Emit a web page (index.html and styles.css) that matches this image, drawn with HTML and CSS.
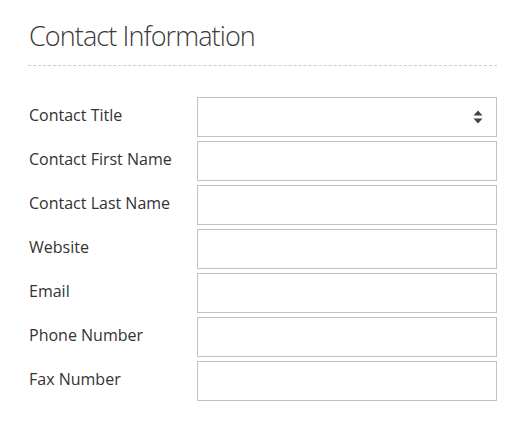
FILE: index.html
```html
<!DOCTYPE html>
<html lang="en">
<head>
  <meta charset="UTF-8">
  <title>Contact Information</title>
  <link rel="stylesheet" href="styles.css">
</head>
<body>
  <div class="section">
    <h2 class="section-title">Contact Information</h2>

    <form class="contact-form">
      <div class="row">
        <label for="title">Contact Title</label>
        <div class="select-wrap">
          <select id="title"><option></option></select>
          <svg class="caret" width="10" height="14" viewBox="0 0 10 14">
            <path d="M5 0.5 L9.5 5.5 L0.5 5.5 Z M5 13.5 L9.5 8.5 L0.5 8.5 Z" fill="#444"/>
          </svg>
        </div>
      </div>
      <div class="row">
        <label for="first">Contact First Name</label>
        <input type="text" id="first">
      </div>
      <div class="row">
        <label for="last">Contact Last Name</label>
        <input type="text" id="last">
      </div>
      <div class="row">
        <label for="web">Website</label>
        <input type="text" id="web">
      </div>
      <div class="row">
        <label for="email">Email</label>
        <input type="text" id="email">
      </div>
      <div class="row">
        <label for="phone">Phone Number</label>
        <input type="text" id="phone">
      </div>
      <div class="row">
        <label for="fax">Fax Number</label>
        <input type="text" id="fax">
      </div>
    </form>
  </div>
</body>
</html>
```

FILE: styles.css
```css
body { margin: 0; background: #fff; font-family: "Open Sans", Arial, sans-serif; color: #333; }
.section { width: 469px; padding: 18px 0 0 28px; }
/* heading is a light weight in the original, narrower than regular */
.section-title { margin: 0; padding: 0 0 12px 1px; font-size: 27px; font-weight: 300; letter-spacing: -0.9px; color: #3a3a3a; line-height: 35px; border-bottom: 1px dashed #ccc; }
.contact-form { display: flex; flex-direction: column; gap: 4px; margin-top: 31px; padding-left: 1px; }
.row { display: grid; grid-template-columns: 168px 300px; align-items: center; height: 40px; }
.row label { font-size: 16px; color: #333; margin: -2px 0 2px; }
.row input, .row select { box-sizing: border-box; width: 300px; height: 40px; border: 1px solid #c2c2c2; border-radius: 0; background: #fff; margin: 0; padding: 0 10px; font: inherit; appearance: none; -webkit-appearance: none; outline: none; }
.select-wrap { position: relative; width: 300px; height: 40px; }
.caret { position: absolute; right: 14px; top: 13px; }
```
